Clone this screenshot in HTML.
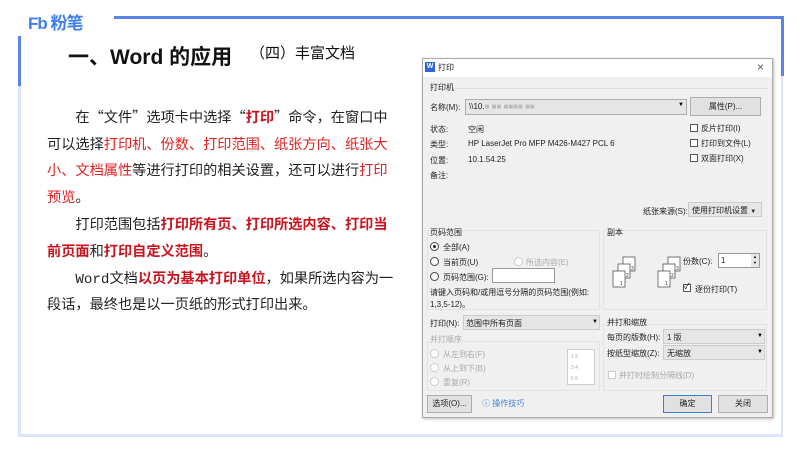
<!DOCTYPE html>
<html><head><meta charset="utf-8"><style>
*{margin:0;padding:0;box-sizing:border-box}
body{width:800px;height:450px;background:#fff;position:relative;overflow:hidden;font-family:"Liberation Sans","Noto Sans CJK SC",sans-serif}
.a{position:absolute;white-space:nowrap}
.l{position:absolute;left:47px;font-size:14.2px;line-height:20px;color:#222;white-space:nowrap;font-family:"Noto Sans CJK SC",sans-serif}
.m{font-family:"Liberation Mono",monospace}
.r{color:#e02020}.rb{color:#c8141e;font-weight:bold}
.d{font-size:8px;color:#222}
.g{color:#aaa}
.box{position:absolute;border:1px solid #bbb;background:#fff}
.btn{position:absolute;border:1px solid #adadad;background:#e1e1e1;font-size:8px;text-align:center;color:#222}
.cb{position:absolute;width:8px;height:8px;border:1px solid #555;background:#fff}
.rd{position:absolute;width:9px;height:9px;border:1px solid #444;border-radius:50%;background:#fff}
.sec{position:absolute;border:1px solid #e3e3e3}
</style></head><body>
<div class="a" style="left:114px;top:16px;width:670px;height:3px;background:#5b83e8"></div>
<div class="a" style="left:781px;top:16px;width:3px;height:60px;background:#5b83e8"></div>
<div class="a" style="left:781px;top:76px;width:2px;height:360px;background:#dbe4fb"></div>
<div class="a" style="left:18px;top:36px;width:3px;height:50px;background:#5b83e8"></div>
<div class="a" style="left:18px;top:86px;width:3px;height:350px;background:#dbe4fb"></div>
<div class="a" style="left:18px;top:434px;width:765px;height:3px;background:#dbe4fb"></div>
<div class="a" style="left:28px;top:9px;font-size:17px;font-weight:bold;color:#3f7ef0;letter-spacing:-1px;font-family:'Liberation Sans','Noto Sans CJK SC',sans-serif">Fb 粉笔</div>
<div class="a" style="left:68px;top:41px;font-size:21px;font-weight:bold;color:#111">一、Word 的应用</div>
<div class="a" style="left:250px;top:42px;font-size:15px;color:#111;font-family:'Noto Sans CJK SC',sans-serif">（四）丰富文档</div>
<div class="l" style="top:107px">　　在“文件”选项卡中选择“<span class="rb">打印</span>”命令，在窗口中</div>
<div class="l" style="top:134px">可以选择<span class="r">打印机、份数、打印范围、纸张方向、纸张大</span></div>
<div class="l" style="top:160px"><span class="r">小、文档属性</span>等进行打印的相关设置，还可以进行<span class="r">打印</span></div>
<div class="l" style="top:187px"><span class="r">预览</span>。</div>
<div class="l" style="top:214px">　　打印范围包括<span class="rb">打印所有页、打印所选内容、打印当</span></div>
<div class="l" style="top:241px"><span class="rb">前页面</span>和<span class="rb">打印自定义范围</span>。</div>
<div class="l" style="top:268px">　　<span class="m">Word</span>文档<span class="rb">以页为基本打印单位</span>，如果所选内容为一</div>
<div class="l" style="top:294px">段话，最终也是以一页纸的形式打印出来。</div>
<div class="a" style="left:422px;top:58px;width:351px;height:360px;background:#f0f0f0;border:1px solid #aaa;box-shadow:1px 1px 3px #bbb"></div>
<div class="a" style="left:423px;top:59px;width:349px;height:18px;background:#fff"></div>
<div class="a" style="left:425px;top:62px;width:10px;height:10px;background:#2b65d9;color:#fff;font-size:7px;font-weight:bold;text-align:center;line-height:10px">W</div>
<div class="a d" style="left:438px;top:62px">打印</div>
<div class="a" style="left:757px;top:60px;font-size:12px;color:#555">×</div>
<div class="a d" style="left:430px;top:82px">打印机</div>
<div class="a" style="left:455px;top:88px;width:312px;height:1px;background:#ddd"></div>
<div class="a d" style="left:430px;top:102px">名称(M):</div>
<div class="box" style="left:465px;top:99px;width:222px;height:16px;background:#e6e6e6;border-color:#adadad"></div>
<div class="a d" style="left:469px;top:102px">\\10.<span style="color:#bbb">■ ■■ ■■■■ ■■</span></div>
<div class="a" style="left:678px;top:102px;font-size:6px">▼</div>
<div class="btn" style="left:690px;top:97px;width:71px;height:19px;line-height:17px">属性(P)...</div>
<div class="a d" style="left:430px;top:124px">状态:</div><div class="a d" style="left:468px;top:124px">空闲</div>
<div class="a d" style="left:430px;top:139px">类型:</div><div class="a d" style="left:468px;top:139px">HP LaserJet Pro MFP M426-M427 PCL 6</div>
<div class="a d" style="left:430px;top:155px">位置:</div><div class="a d" style="left:468px;top:155px">10.1.54.25</div>
<div class="a d" style="left:430px;top:170px">备注:</div>
<div class="cb" style="left:690px;top:124px"></div><div class="a d" style="left:701px;top:123px">反片打印(I)</div>
<div class="cb" style="left:690px;top:139px"></div><div class="a d" style="left:701px;top:138px">打印到文件(L)</div>
<div class="cb" style="left:690px;top:154px"></div><div class="a d" style="left:701px;top:153px">双面打印(X)</div>
<div class="a d" style="left:643px;top:206px">纸张来源(S):</div>
<div class="box" style="left:688px;top:202px;width:74px;height:15px;background:#e6e6e6;border-color:#ccc"></div>
<div class="a d" style="left:692px;top:205px">使用打印机设置 <span style="font-size:6px">▼</span></div>
<div class="sec" style="left:427px;top:230px;width:173px;height:80px"></div>
<div class="sec" style="left:603px;top:230px;width:164px;height:80px"></div>
<div class="a d" style="left:430px;top:227px;background:#f0f0f0">页码范围</div>
<div class="a d" style="left:607px;top:227px;background:#f0f0f0">副本</div>
<div class="rd" style="left:430px;top:242px"></div><div class="a" style="left:433px;top:245px;width:3px;height:3px;border-radius:50%;background:#222"></div>
<div class="a d" style="left:443px;top:242px">全部(A)</div>
<div class="rd" style="left:430px;top:257px"></div><div class="a d" style="left:443px;top:257px">当前页(U)</div>
<div class="rd" style="left:514px;top:257px;border-color:#ccc"></div><div class="a d g" style="left:526px;top:257px">所选内容(E)</div>
<div class="rd" style="left:430px;top:272px"></div><div class="a d" style="left:443px;top:272px">页码范围(G):</div>
<div class="box" style="left:492px;top:268px;width:63px;height:15px;border-color:#999"></div>
<div class="a d" style="left:430px;top:287px">请键入页码和/或用逗号分隔的页码范围(例如:</div>
<div class="a d" style="left:430px;top:299px">1,3,5-12)。</div>
<svg class="a" style="left:608px;top:254px" width="80" height="38"><g fill="#fff" stroke="#555" stroke-width="0.8">
<rect x="15" y="3" width="12" height="14"/><rect x="10" y="10" width="12" height="14"/><rect x="5" y="17" width="12" height="16"/>
<rect x="60" y="3" width="12" height="14"/><rect x="55" y="10" width="12" height="14"/><rect x="50" y="17" width="12" height="16"/></g>
<g font-size="5" fill="#333" font-family="Liberation Sans"><text x="23" y="16">3</text><text x="18" y="23">2</text><text x="12" y="31">1</text><text x="68" y="16">3</text><text x="63" y="23">2</text><text x="57" y="31">1</text></g></svg>
<div class="a d" style="left:683px;top:256px">份数(C):</div>
<div class="box" style="left:718px;top:253px;width:42px;height:15px;border-color:#999"></div>
<div class="a d" style="left:721px;top:256px">1</div>
<div class="a" style="left:751px;top:254px;width:8px;height:13px;background:#e6e6e6;font-size:4px;line-height:6px;text-align:center">▲<br>▼</div>
<div class="cb" style="left:683px;top:284px"></div><div class="a" style="left:684px;top:281px;font-size:8px">✓</div>
<div class="a d" style="left:695px;top:284px">逐份打印(T)</div>
<div class="a d" style="left:430px;top:318px">打印(N):</div>
<div class="box" style="left:463px;top:315px;width:137px;height:15px;background:#e6e6e6;border-color:#ccc"></div>
<div class="a d" style="left:466px;top:318px">范围中所有页面</div><div class="a" style="left:592px;top:319px;font-size:6px">▼</div>
<div class="sec" style="left:427px;top:341px;width:173px;height:50px"></div>
<div class="a d g" style="left:430px;top:334px;background:#f0f0f0">并打顺序</div>
<div class="rd" style="left:430px;top:349px;border-color:#ccc"></div><div class="a d g" style="left:443px;top:349px">从左到右(F)</div>
<div class="rd" style="left:430px;top:363px;border-color:#ccc"></div><div class="a d g" style="left:443px;top:363px">从上到下(B)</div>
<div class="rd" style="left:430px;top:377px;border-color:#ccc"></div><div class="a d g" style="left:443px;top:377px">重复(R)</div>
<div class="box" style="left:567px;top:349px;width:28px;height:36px;border-color:#ccc"></div>
<div class="a" style="left:571px;top:352px;font-size:5px;color:#aaa;line-height:11px">1 2<br>3 4<br>5 6</div>
<div class="sec" style="left:603px;top:324px;width:164px;height:67px"></div>
<div class="a d" style="left:607px;top:317px;background:#f0f0f0">并打和缩放</div>
<div class="a d" style="left:607px;top:332px">每页的版数(H):</div>
<div class="box" style="left:663px;top:329px;width:102px;height:15px;background:#e6e6e6;border-color:#ccc"></div>
<div class="a d" style="left:667px;top:332px">1 版</div><div class="a" style="left:757px;top:333px;font-size:6px">▼</div>
<div class="a d" style="left:607px;top:348px">按纸型缩放(Z):</div>
<div class="box" style="left:663px;top:345px;width:102px;height:15px;background:#e6e6e6;border-color:#ccc"></div>
<div class="a d" style="left:667px;top:348px">无缩放</div><div class="a" style="left:757px;top:349px;font-size:6px">▼</div>
<div class="cb" style="left:608px;top:371px;border-color:#ccc"></div><div class="a d g" style="left:619px;top:370px">并打时绘制分隔线(D)</div>
<div class="btn" style="left:427px;top:395px;width:45px;height:18px;line-height:16px">选项(O)...</div>
<div class="a" style="left:482px;top:398px;font-size:8px;color:#3b7fd9">ⓘ 操作技巧</div>
<div class="btn" style="left:663px;top:395px;width:49px;height:18px;line-height:16px;border-color:#3b7fd9">确定</div>
<div class="btn" style="left:718px;top:395px;width:50px;height:18px;line-height:16px">关闭</div>
</body></html>
